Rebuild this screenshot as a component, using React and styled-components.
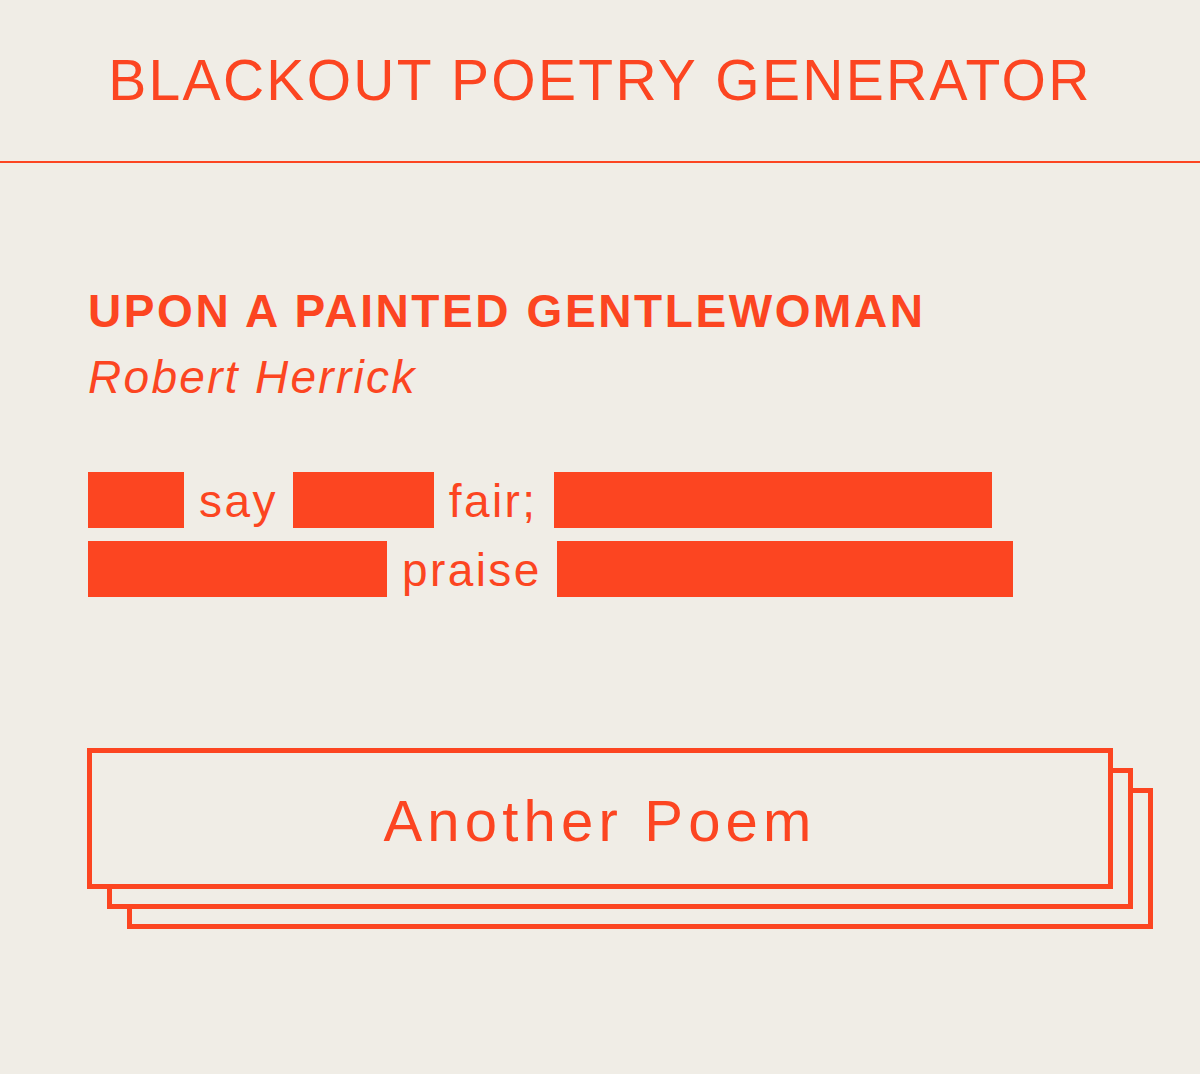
import styled, { createGlobalStyle } from 'styled-components';

const ORANGE = '#fc4521';
const PAPER = '#f0ede6';

const GlobalStyle = createGlobalStyle`
  html, body {
    margin: 0;
    padding: 0;
    background: ${PAPER};
  }
  body {
    font-family: 'Liberation Sans', Arial, Helvetica, sans-serif;
    color: ${ORANGE};
  }
`;

const Page = styled.div`
  width: 1200px;
  min-height: 1074px;
  background: ${PAPER};
`;

const Header = styled.header`
  padding: 52px 0;
  border-bottom: 2px solid ${ORANGE};
  text-align: center;
`;

const SiteTitle = styled.h1`
  margin: 0;
  font-size: 57px;
  line-height: 57px;
  font-weight: 400;
  letter-spacing: 2.3px;
`;

const Main = styled.main`
  padding: 125px 87px 0 88px;
`;

const PoemTitle = styled.h2`
  margin: 0;
  font-size: 46px;
  line-height: 46px;
  font-weight: 700;
  letter-spacing: 2.6px;
`;

const Author = styled.p`
  margin: 20px 0 0;
  font-size: 46px;
  line-height: 46px;
  font-style: italic;
  letter-spacing: 2.3px;
`;

const Poem = styled.div`
  margin-top: 72px;
  display: flex;
  flex-direction: column;
  gap: 13px;
`;

const Line = styled.div`
  display: flex;
  align-items: flex-start;
  gap: 15px;
  height: 56px;
`;

const Word = styled.span`
  font-size: 46px;
  line-height: 56px;
  padding-top: 1px;
  letter-spacing: 2.4px;
`;

const Blackout = styled.span`
  display: block;
  width: ${(p) => p.$w}px;
  height: 56px;
  margin-left: ${(p) => p.$shift || 0}px;
  background: ${ORANGE};
`;

const ButtonWrap = styled.div`
  margin-top: 151px;
`;

const StackButton = styled.button`
  display: block;
  width: 1026px;
  height: 141px;
  margin-left: -1px;
  padding: 4px 0 0 0;
  border: 5px solid ${ORANGE};
  background: ${PAPER};
  color: ${ORANGE};
  font-family: inherit;
  font-size: 58px;
  line-height: 1;
  letter-spacing: 5.2px;
  cursor: pointer;
  box-shadow:
    20px 20px 0 -5px ${PAPER},
    20px 20px 0 0 ${ORANGE},
    40px 40px 0 -5px ${PAPER},
    40px 40px 0 0 ${ORANGE};
`;

const lines = [
  [{ w: 96 }, 'say', { w: 141 }, 'fair;', { w: 438, shift: 2 }],
  [{ w: 299 }, 'praise', { w: 456 }],
];

export default function App() {
  return (
    <Page>
      <GlobalStyle />
      <Header>
        <SiteTitle>BLACKOUT POETRY GENERATOR</SiteTitle>
      </Header>
      <Main>
        <PoemTitle>UPON A PAINTED GENTLEWOMAN</PoemTitle>
        <Author>Robert Herrick</Author>
        <Poem>
          {lines.map((line, i) => (
            <Line key={i}>
              {line.map((part, j) =>
                typeof part === 'string' ? (
                  <Word key={j}>{part}</Word>
                ) : (
                  <Blackout key={j} $w={part.w} $shift={part.shift} />
                )
              )}
            </Line>
          ))}
        </Poem>
        <ButtonWrap>
          <StackButton>Another Poem</StackButton>
        </ButtonWrap>
      </Main>
    </Page>
  );
}
